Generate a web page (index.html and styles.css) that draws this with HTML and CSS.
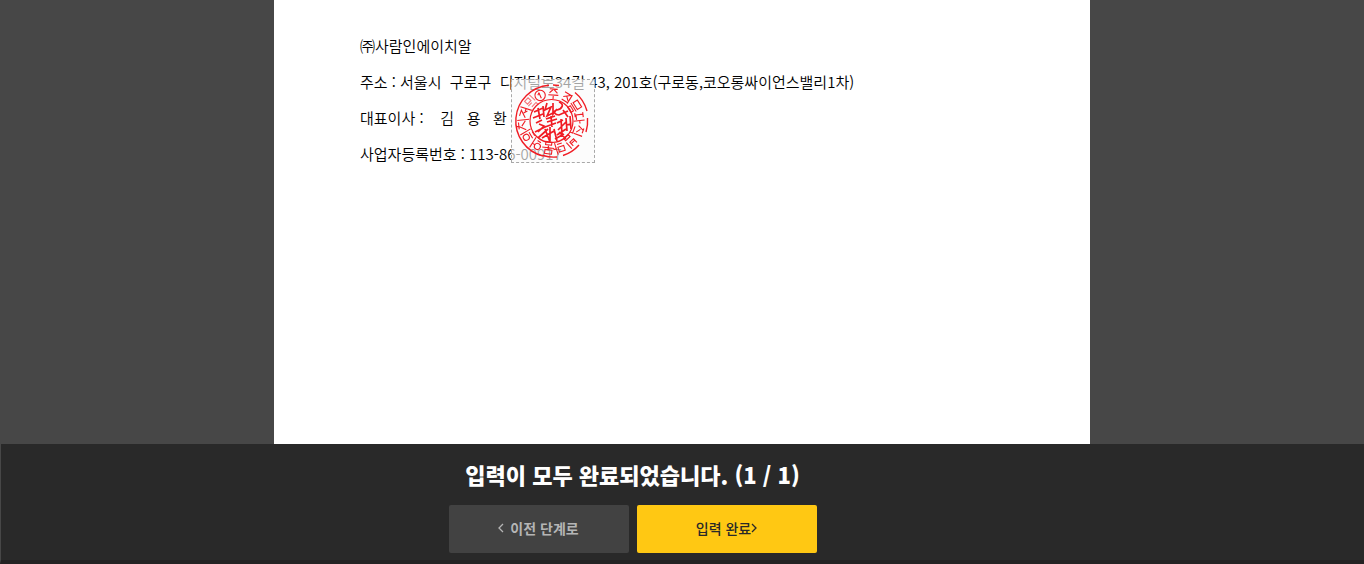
FILE: index.html
```
<!DOCTYPE html>
<html lang="ko">
<head>
    <meta charset="UTF-8">
    <meta name="viewport" content="width=device-width, initial-scale=1.0">
    <title>입력 완료</title>
    <link rel="stylesheet" href="styles.css">
</head>
<body>
    <div class="viewer">
        <div class="paper">
            <p>㈜사람인에이치알</p>
            <p>주소 : 서울시&nbsp; 구로구&nbsp; 디지털로34길 43, 201호(구로동,코오롱싸이언스밸리1차)</p>
            <p>대표이사 :&nbsp;&nbsp;&nbsp; 김&nbsp;&nbsp; 용&nbsp;&nbsp; 환</p>
            <p>사업자등록번호 : 113-86-00917</p>
            <div class="stamp">
                <svg viewBox="0 0 80 80" role="img" aria-label="법인 인감">
                    <!-- 테두리 -->
                    <path d="M30 75A36 36 0 0 1 36 4.200M40 4A36 36 0 0 1 46 4.500M62 11.500A36 36 0 0 1 74 30M74.500 37A36 36 0 0 1 73 51M66 64A36 36 0 0 1 50 74.500M44 76A36 36 0 0 1 30 74.500"/>
                    <circle class="inner" cx="38.500" cy="40" r="21.500"/>
                    <!-- 바깥쪽 글자 -->
                    <g class="ring" transform="translate(38.500 40)">
                        <g transform="rotate(-24)"><circle cy="-28" r="5.200"/><path d="M0-31v6M-2-29l2-2"/></g>
                        <g transform="rotate(4)"><path d="M-4-32h8M0-32l-4 4M0-32l4 4M-5-26h10M0-26v4"/></g>
                        <g transform="rotate(32)"><path d="M-4-32h7l-6 5M0-29l3 3M4-33v10M-3-24h7"/></g>
                        <g transform="rotate(58)"><path d="M-4-33h8v5h-8zM-5-26h10M-3-24h6v3h-6z"/></g>
                        <g transform="rotate(83)"><path d="M-5-32h5M-3-32v7h5M3-33v11M3-28h3M-5-24h4"/></g>
                        <g transform="rotate(110)"><path d="M-4-33h5M-2-33l-3 6M-2-30l4 3M4-34v9M-3-24h7v3"/></g>
                        <g transform="rotate(137)"><path d="M-4-33v5h5v-5M-4-30h5M4-34v8M-3-24h6v3h-6z"/></g>
                        <g transform="rotate(162)"><path d="M-4-32h6v5h-6zM4-34v12M4-28h3M-3-24h5"/></g>
                        <g transform="rotate(187)"><path d="M-4-33h7v4h-7zM-6-27h12M-3-24h6v3h-6zM0-29v5"/></g>
                        <g transform="rotate(213)"><circle cx="-2" cy="-29" r="3"/><path d="M4-34v12M1-29h3M-3-24h4"/></g>
                        <g transform="rotate(239)"><circle cx="-1" cy="-30" r="3"/><path d="M4-34v12M-5-25h7M-4-22h5"/></g>
                        <g transform="rotate(264)"><path d="M-5-33h7M-2-33l-4 7M-2-30l5 4M4-34v12M-2-35v2"/></g>
                        <g transform="rotate(288)"><path d="M-5-32h6l-6 6M-1-29l3 3M4-34v12M1-28h3"/></g>
                        <g transform="rotate(313)"><path class="faint" d="M-4-33h5v4h-5zM4-34v8M-3-24h6v3M-5-27h5"/></g>
                    </g>
                    <!-- 가운데 글자 -->
                    <path class="core" d="M21 31l9-4M20 37l10-4M25 27l2 11M30 25l1 11M34 22l-2 7 6-3-4 9 6-3M40 22l0 11 4-5M46 21c6 2 3 7-2 8s-2 5 2 5l9-4M50 29l5 7M23 42l6-3M33 38l9-3M34 41l10-3M38 35l1 11M32 46l11-4M26 43l5 2-6 6M22 51l10-5M25 57l10-9M32 48l5 13M37 46l0 14M29 57l12-7M41 48l3 12M44 42l6-3M45 49l8-8M48 38l1 15M44 54l9-6M53 37l1 13M53 44l5-1M57 35l1 13M46 51l7 7M42 58l9-5"/>
                </svg>
            </div>
        </div>
    </div>
    <div class="bottomBar">
        <h2>입력이 모두 완료되었습니다. (1 / 1)</h2>
        <div class="btnBox">
            <button type="button" class="btn prev">
                <svg width="6" height="10" viewBox="0 0 6 10"><path d="M5 1L1 5l4 4"/></svg>
                <span>이전 단계로</span>
            </button>
            <button type="button" class="btn done">
                <span>입력 완료</span>
                <svg width="6" height="10" viewBox="0 0 6 10"><path d="M1 1l4 4-4 4"/></svg>
            </button>
        </div>
    </div>
</body>
</html>
```
FILE: styles.css
```
*{
    margin:0;
    padding:0;
    box-sizing:border-box;
}
body{
    display:flex;
    flex-direction:column;
    min-height:100vh;
    font-family:"Noto Sans CJK KR","Noto Sans",sans-serif;
    background:#474747;
}
.viewer{
    display:flex;
    flex:1;
    justify-content:center;
}
.paper{
    position:relative;
    width:816px;
    max-width:100%;
    padding:28px 86px;
    background:#fff;
    color:#000;
    font-size:15px;
    font-weight:350;
    line-height:36px;
}
.stamp{
    position:absolute;
    top:79px;
    left:237px;
    width:84px;
    height:84px;
    padding:1px;
    border:1px dashed #a8a8a8;
    background:rgba(250,250,250,.65);
}
.stamp svg{
    display:block;
    width:80px;
    height:80px;
    fill:none;
    stroke:#f01c24;
    stroke-width:1.4;
}
.stamp .inner{
    stroke-width:1.2;
}
.stamp .ring{
    stroke-width:1.1;
}
.stamp .faint{
    opacity:.6;
}
.stamp .core{
    stroke-width:1.7;
}
.bottomBar{
    padding:12px 100px 7px 0;
    border-left:1px solid #474747;
    border-bottom:4px solid #242122;
    background:#292929;
    text-align:center;
}
.bottomBar h2{
    color:#fff;
    font-size:22px;
    font-weight:900;
    line-height:36px;
}
.btnBox{
    display:flex;
    justify-content:center;
    gap:8px;
    margin-top:13px;
}
.btn{
    display:flex;
    align-items:center;
    justify-content:center;
    width:180px;
    height:48px;
    padding-bottom:2px;
    border:0;
    border-radius:2px;
    font-family:inherit;
    font-size:14px;
    font-weight:500;
    cursor:pointer;
}
.btn svg{
    fill:none;
    stroke:currentColor;
    stroke-width:1.3;
}
.prev{
    gap:6px;
    background:#424242;
    color:#b5b5b5;
    font-weight:700;
}
.done{
    background:#ffc813;
    color:#292929;
}
```
